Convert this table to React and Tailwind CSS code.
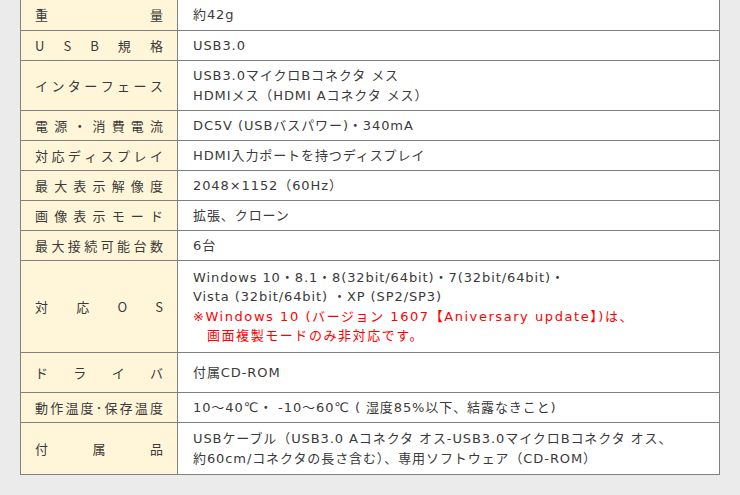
const rows = [
  { label: "重量", h: "h-[31px]", value: ["約42g"] },
  { label: "USB規格", h: "h-[30px]", value: ["USB3.0"] },
  {
    label: "インターフェース",
    h: "h-[50px]",
    value: ["USB3.0マイクロBコネクタ メス", "HDMIメス（HDMI Aコネクタ メス）"],
  },
  { label: "電源・消費電流", h: "h-[30px]", value: ["DC5V (USBバスパワー)・340mA"] },
  { label: "対応ディスプレイ", h: "h-[30px]", value: ["HDMI入力ポートを持つディスプレイ"] },
  { label: "最大表示解像度", h: "h-[30px]", value: ["2048×1152（60Hz）"] },
  { label: "画像表示モード", h: "h-[30px]", value: ["拡張、クローン"] },
  { label: "最大接続可能台数", h: "h-[30px]", value: ["6台"] },
  {
    label: "対応OS",
    h: "h-[92px]",
    value: ["Windows 10・8.1・8(32bit/64bit)・7(32bit/64bit)・", "Vista (32bit/64bit) ・XP (SP2/SP3)"],
    note: ["※Windows 10 (バージョン 1607【Aniversary update】)は、", "画面複製モードのみ非対応です。"],
  },
  { label: "ドライバ", h: "h-[40px]", value: ["付属CD-ROM"] },
  { label: "動作温度･保存温度", h: "h-[30px]", value: ["10〜40℃・ -10〜60℃ ( 湿度85%以下、結露なきこと)"] },
  {
    label: "付属品",
    h: "h-[52px]",
    value: ["USBケーブル（USB3.0 Aコネクタ オス-USB3.0マイクロBコネクタ オス、", "約60cm/コネクタの長さ含む）、専用ソフトウェア（CD-ROM）"],
  },
];

// spread the label characters over the whole cell width
const Label = ({ text }) => (
  <div className="flex justify-between px-[14px] w-full">
    {Array.from(text).map((ch, i) => (
      <span key={i}>{ch}</span>
    ))}
  </div>
);

export default function App() {
  return (
    <div
      className="w-[740px] h-[495px] overflow-hidden bg-[#ebebeb] pl-[20px] text-[13px] text-[#3a3a3a]"
      style={{ fontFamily: '"Noto Sans CJK JP", sans-serif' }}
    >
      <div className="w-[700px] mt-[-1px] border border-b-0 border-[#808080] bg-white">
        {rows.map((row) => (
          <div key={row.label} className={`flex border-b border-[#808080] ${row.h}`}>
            <div className="w-[157px] shrink-0 flex items-center bg-[#fff5d9] border-r border-[#808080]">
              <Label text={row.label} />
            </div>
            <div
              className="flex-1 flex flex-col justify-center pl-[15px] leading-[19.5px] tracking-[0.07em]"
              style={{ fontFamily: '"DejaVu Sans", "Noto Sans CJK JP", sans-serif' }}
            >
              {row.value.map((line, i) => (
                <div key={i}>{line}</div>
              ))}
              {row.note && (
                <div className="text-[#ff0000] tracking-[0.12em]">
                  <div>{row.note[0]}</div>
                  <div className="pl-[14px]">{row.note[1]}</div>
                </div>
              )}
            </div>
          </div>
        ))}
      </div>
    </div>
  );
}
